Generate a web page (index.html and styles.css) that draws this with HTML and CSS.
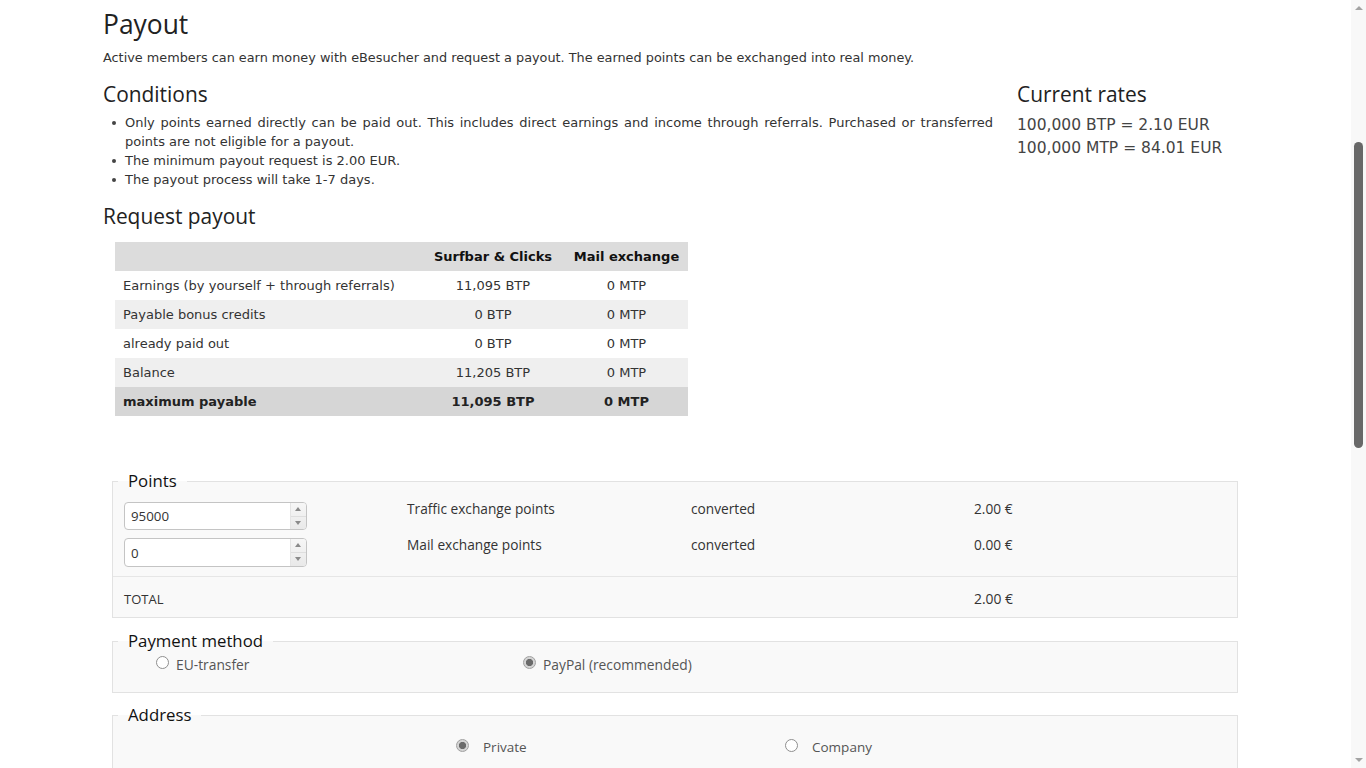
FILE: index.html
```html
<!DOCTYPE html>
<html lang="en">
<head>
<meta charset="utf-8">
<title>Payout</title>
<link rel="stylesheet" href="styles.css">
</head>
<body>
<div class="page">
  <div class="container">
    <h1 class="title">Payout</h1>
    <p class="intro">Active members can earn money with eBesucher and request a payout. The earned points can be exchanged into real money.</p>

    <div class="cols">
      <div class="col-main">
        <h2 class="subtitle">Conditions</h2>
        <ul class="conditions">
          <li>Only points earned directly can be paid out. This includes direct earnings and income through referrals. Purchased or transferred points are not eligible for a payout.</li>
          <li>The minimum payout request is 2.00 EUR.</li>
          <li>The payout process will take 1-7 days.</li>
        </ul>
      </div>
      <div class="col-side">
        <h2 class="subtitle">Current rates</h2>
        <div class="rates">
          <div>100,000 BTP = 2.10 EUR</div>
          <div>100,000 MTP = 84.01 EUR</div>
        </div>
      </div>
    </div>

    <h2 class="subtitle request">Request payout</h2>

    <table class="summary">
      <thead>
        <tr><th class="c1"></th><th class="c2">Surfbar &amp; Clicks</th><th class="c3">Mail exchange</th></tr>
      </thead>
      <tbody>
        <tr><td class="c1">Earnings (by yourself + through referrals)</td><td class="c2">11,095 BTP</td><td class="c3">0 MTP</td></tr>
        <tr class="alt"><td class="c1">Payable bonus credits</td><td class="c2">0 BTP</td><td class="c3">0 MTP</td></tr>
        <tr><td class="c1">already paid out</td><td class="c2">0 BTP</td><td class="c3">0 MTP</td></tr>
        <tr class="alt"><td class="c1">Balance</td><td class="c2">11,205 BTP</td><td class="c3">0 MTP</td></tr>
        <tr class="max"><td class="c1">maximum payable</td><td class="c2">11,095 BTP</td><td class="c3">0 MTP</td></tr>
      </tbody>
    </table>

    <fieldset class="box points">
      <legend>Points</legend>
      <div class="points-grid">
        <div class="num"><input type="text" value="95000"><span class="spin"><span class="up"></span><span class="down"></span></span></div>
        <div class="lbl">Traffic exchange points</div>
        <div class="lbl">converted</div>
        <div class="lbl">2.00 €</div>
        <div class="num tall"><input type="text" value="0"><span class="spin"><span class="up"></span><span class="down"></span></span></div>
        <div class="lbl">Mail exchange points</div>
        <div class="lbl">converted</div>
        <div class="lbl">0.00 €</div>
      </div>
      <div class="total-row">
        <div>TOTAL</div>
        <div></div>
        <div></div>
        <div class="amount">2.00 €</div>
      </div>
    </fieldset>

    <fieldset class="box payment">
      <legend>Payment method</legend>
      <div class="radio-row pay">
        <label class="opt"><input type="radio" name="pm"><span>EU-transfer</span></label>
        <label class="opt"><input type="radio" name="pm" checked><span>PayPal (recommended)</span></label>
      </div>
    </fieldset>

    <fieldset class="box address">
      <legend>Address</legend>
      <div class="radio-row addr">
        <label class="opt wide"><input type="radio" name="ad" checked><span>Private</span></label>
        <label class="opt wide"><input type="radio" name="ad"><span>Company</span></label>
      </div>
    </fieldset>
  </div>
</div>
<div class="scrollbar">
  <span class="arrow-up"></span>
  <span class="thumb"></span>
  <span class="arrow-down"></span>
</div>
</body>
</html>
```

FILE: styles.css
```css
html, body {
  margin: 0;
  padding: 0;
  height: 100%;
  overflow: hidden;
  background: #ffffff;
}

body {
  font-family: "DejaVu Sans", Verdana, sans-serif;
  font-size: 13px;
  color: #333333;
}

.page {
  width: 1351px;
  padding-top: 8px;
}

.container {
  width: 1137px;
  margin-left: 103px;
}

.title {
  font-family: "Open Sans", sans-serif;
  font-weight: 400;
  font-size: 26.4px;
  line-height: 32px;
  margin: 0;
  color: #222222;
}

.intro {
  margin: 8px 0 0;
  font-size: 12.83px;
  line-height: 19px;
}

.cols {
  display: grid;
  grid-template-columns: 890px 1fr;
  column-gap: 24px;
  margin-top: 13px;
}

.subtitle {
  font-family: "Open Sans", sans-serif;
  font-weight: 400;
  font-size: 20.9px;
  line-height: 28px;
  margin: 0;
  color: #222222;
}

.conditions {
  margin: 5px 0 0;
  padding-left: 22px;
  line-height: 19px;
  text-align: justify;
  list-style: none;
}

.conditions li {
  position: relative;
}

.conditions li::before {
  content: "";
  position: absolute;
  left: -13px;
  top: 8px;
  width: 4px;
  height: 4px;
  border-radius: 50%;
  background: #444444;
}

.rates {
  margin-top: 6px;
  font-size: 15.5px;
  line-height: 23px;
  color: #444444;
}

.request {
  margin-top: 13px;
}

.summary {
  margin: 12px 0 0 12px;
  border-collapse: collapse;
  width: 573px;
}

.summary th,
.summary td {
  height: 29px;
  padding: 0 8px;
  box-sizing: border-box;
  white-space: nowrap;
}

.summary th {
  background: #dcdcdc;
  font-weight: 700;
  color: #111111;
}

.summary .c1 {
  text-align: left;
}

.summary .c2 {
  width: 144px;
  text-align: center;
}

.summary .c3 {
  width: 123px;
  text-align: center;
}

.summary tr.alt td {
  background: #efefef;
}

.summary tr.max td {
  background: #d6d6d6;
  font-weight: 700;
  color: #222222;
}

.box {
  margin: 0 0 0 9px;
  width: 1126px;
  box-sizing: border-box;
  padding: 0;
  min-width: 0;
  border: 1px solid #e2e2e2;
  background: #f9f9f9;
}

.box legend {
  font-family: "Open Sans", sans-serif;
  font-size: 16.8px;
  line-height: 24px;
  color: #111111;
  margin-left: 5px;
  padding: 0 10px;
}

.points {
  margin-top: 53px;
  font-family: "Open Sans", sans-serif;
}

.points-grid {
  display: grid;
  grid-template-columns: 283px 284px 283px 1fr;
  row-gap: 8px;
  align-items: start;
  padding: 9px 0 9px 11px;
  border-bottom: 1px solid #e6e6e6;
}

.lbl {
  font-size: 13.7px;
  line-height: 14px;
  color: #333333;
}

.num {
  width: 183px;
  height: 28px;
  box-sizing: border-box;
  border: 1px solid #c4c4c4;
  border-radius: 4px;
  background: #ffffff;
  display: flex;
  overflow: hidden;
}

.num.tall {
  height: 29px;
}

.num input {
  flex: 1;
  min-width: 0;
  border: 0;
  outline: 0;
  padding: 0 0 0 6px;
  font-family: "Open Sans", sans-serif;
  font-size: 13.3px;
  color: #333333;
  background: transparent;
}

.spin {
  width: 15px;
  display: flex;
  flex-direction: column;
  border-left: 1px solid #e4e4e4;
  background: linear-gradient(#f6f6f6, #e9e9e9);
}

.spin .up,
.spin .down {
  flex: 1;
  position: relative;
}

.spin .up {
  border-bottom: 1px solid #dedede;
}

.spin .up::after,
.spin .down::after {
  content: "";
  position: absolute;
  left: 4px;
  top: 4px;
  border-left: 3.5px solid transparent;
  border-right: 3.5px solid transparent;
}

.spin .up::after {
  border-bottom: 4px solid #8a8a8a;
}

.spin .down::after {
  border-top: 4px solid #8a8a8a;
}

.total-row {
  display: grid;
  grid-template-columns: 283px 284px 283px 1fr;
  padding: 13px 0 0 11px;
  height: 40px;
  box-sizing: border-box;
  line-height: 18px;
  color: #333333;
}

.total-row .amount {
  font-size: 13.9px;
}

.payment {
  margin-top: 11px;
  padding-bottom: 18px;
}

.radio-row {
  display: flex;
  height: 20px;
  align-items: center;
  font-family: "Open Sans", sans-serif;
  color: #555555;
}

.pay {
  padding-left: 43px;
  margin-top: 1px;
  font-size: 13.8px;
}

.pay .opt input {
  margin-right: 7px;
}

.pay .opt:first-child {
  width: 367px;
}

.addr {
  padding-left: 343px;
  margin-top: 10px;
  font-size: 13.5px;
}

.addr .opt:first-child {
  width: 329px;
}

.address {
  margin-top: 10px;
  padding-bottom: 40px;
}

.opt {
  display: flex;
  align-items: center;
}

.opt input {
  -webkit-appearance: none;
  appearance: none;
  margin: 0 6px 0 0;
  width: 13px;
  height: 13px;
  border: 1px solid #8f8f8f;
  border-radius: 50%;
  background: #ffffff;
  box-sizing: border-box;
  position: relative;
  top: -2px;
}

.opt input:checked {
  border-color: #a0a0a0;
  background: radial-gradient(circle, #6a6a6a 0 3.4px, #d4d4d4 3.8px 100%);
}

.opt.wide input {
  margin-right: 14px;
}

.scrollbar {
  position: fixed;
  top: 0;
  right: 0;
  width: 15px;
  height: 768px;
  background: #f8f8f8;
}

.scrollbar .thumb {
  position: absolute;
  left: 3px;
  top: 142px;
  width: 9px;
  height: 306px;
  border-radius: 5px;
  background: #686868;
}

.scrollbar .arrow-up,
.scrollbar .arrow-down {
  position: absolute;
  left: 4px;
  border-left: 4px solid transparent;
  border-right: 4px solid transparent;
}

.scrollbar .arrow-up {
  top: 6px;
  border-bottom: 4px solid #a3a3a3;
}

.scrollbar .arrow-down {
  bottom: 6px;
  border-top: 4px solid #a3a3a3;
}
```
